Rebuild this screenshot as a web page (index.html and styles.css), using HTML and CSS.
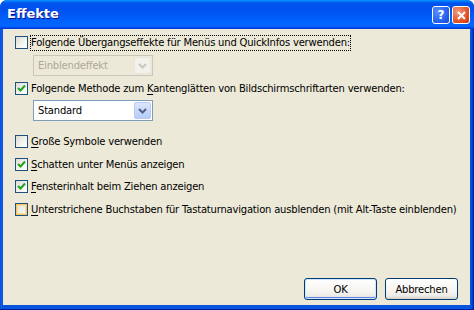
FILE: index.html
```html
<!DOCTYPE html>
<html>
<head>
    <meta charset="UTF-8">
    <title>Effekte</title>
    <link rel="stylesheet" href="styles.css">
</head>
<body>
    <div class="window">
        <div class="titlebar">
            <span class="title">Effekte</span>
            <div class="title-buttons">
                <div class="tb-btn help">?</div>
                <div class="tb-btn close">
                    <svg width="9" height="9" viewBox="0 0 9 9"><path d="M1 1 L8 8 M8 1 L1 8" stroke="#fff" stroke-width="2" fill="none"/></svg>
                </div>
            </div>
        </div>

        <div class="content">
            <div class="check-row first">
                <span class="box"></span>
                <span class="label focus">Folgende Übergangseffekte für Menüs und QuickInfos verwenden:</span>
            </div>
            <div class="combo disabled">
                <span class="combo-text">Einblendeffekt</span>
                <span class="combo-arrow">
                    <svg width="9" height="6" viewBox="0 0 9 6"><path d="M1 1 L4.5 4.5 L8 1" stroke="#C9C7BA" stroke-width="2" fill="none"/></svg>
                </span>
            </div>

            <div class="check-row row-method">
                <span class="box checked"><svg width="9" height="9" viewBox="0 0 9 9"><path d="M1 4 L3.5 6.5 L8 1.5" stroke="#21A121" stroke-width="2" fill="none"/></svg></span>
                <span class="label">Folgende Methode zum <u>K</u>antenglätten von Bildschirmschriftarten verwenden:</span>
            </div>
            <div class="combo combo-method">
                <span class="combo-text">Standard</span>
                <span class="combo-arrow">
                    <svg width="9" height="6" viewBox="0 0 9 6"><path d="M1 1 L4.5 4.5 L8 1" stroke="#4D6185" stroke-width="2" fill="none"/></svg>
                </span>
            </div>

            <div class="check-row row-large">
                <span class="box"></span>
                <span class="label"><u>G</u>roße Symbole verwenden</span>
            </div>
            <div class="check-row row-shadow">
                <span class="box checked"><svg width="9" height="9" viewBox="0 0 9 9"><path d="M1 4 L3.5 6.5 L8 1.5" stroke="#21A121" stroke-width="2" fill="none"/></svg></span>
                <span class="label"><u>S</u>chatten unter Menüs anzeigen</span>
            </div>
            <div class="check-row row-drag">
                <span class="box checked"><svg width="9" height="9" viewBox="0 0 9 9"><path d="M1 4 L3.5 6.5 L8 1.5" stroke="#21A121" stroke-width="2" fill="none"/></svg></span>
                <span class="label"><u>F</u>ensterinhalt beim Ziehen anzeigen</span>
            </div>
            <div class="check-row row-shadow">
                <span class="box hover"></span>
                <span class="label"><u>U</u>nterstrichene Buchstaben für Tastaturnavigation ausblenden (mit Alt-Taste einblenden)</span>
            </div>

            <div class="buttons">
                <button class="btn default">OK</button>
                <button class="btn">Abbrechen</button>
            </div>
        </div>
    </div>
</body>
</html>
```

FILE: styles.css
```css
* {
    margin: 0;
    padding: 0;
    box-sizing: border-box;
}

body {
    width: 474px;
    height: 310px;
    overflow: hidden;
    background: #fff;
    font-family: "DejaVu Sans", Verdana, sans-serif;
    font-size: 10px;
    letter-spacing: -0.2px;
    color: #000;
}

.window {
    width: 474px;
    height: 310px;
    display: flex;
    flex-direction: column;
    border-radius: 7px 7px 0 0;
    background: linear-gradient(to right, #0831D9 0, #166AEE 1px, #0855DD 2px, #0855DD 471px, #0843D0 472px, #001EA0 474px);
    padding: 0 4px 4px 3px;
    border-bottom: 1px solid #001EA0;
}

.titlebar {
    height: 29px;
    margin: 0 -4px 0 -3px;
    border-radius: 7px 7px 0 0;
    background: linear-gradient(#0997FF 0, #0053EE 3px, #0050EE 9px, #0066FF 24px, #0066FF 26px, #005BFF 27px, #003DD7 28px, #003DD7 29px);
    display: flex;
    align-items: center;
    justify-content: space-between;
    padding: 0 4px 2px 7px;
}

.title {
    color: #fff;
    font-weight: bold;
    font-size: 13px;
    letter-spacing: 0;
    text-shadow: 1px 1px #0F1089;
}

.title-buttons {
    display: flex;
    gap: 2px;
    margin-top: 3px;
}

.tb-btn {
    width: 18px;
    height: 18px;
    border: 1px solid #fff;
    border-radius: 3px;
    display: flex;
    align-items: center;
    justify-content: center;
    color: #fff;
    font-weight: bold;
    font-size: 12px;
    letter-spacing: 0;
}

.help {
    background: radial-gradient(circle at 30% 30%, #5A8EFF, #1F5DEA 70%, #1545C8);
}

.close {
    background: radial-gradient(circle at 30% 30%, #F29A7B, #E04A1F 70%, #C43A10);
}

.content {
    flex: 1;
    background: #ECE9D8;
    padding: 5px 12px 0 12px;
    display: flex;
    flex-direction: column;
}

.check-row {
    display: flex;
    align-items: center;
    height: 17px;
}

.row-method {
    margin-top: 4px;
}

.row-large {
    margin-top: 12px;
}

.row-shadow {
    margin-top: 6px;
}

.row-drag {
    margin-top: 5px;
}

.box {
    width: 13px;
    height: 13px;
    flex: none;
    border: 1px solid #1C5180;
    background: linear-gradient(135deg, #DCDCD7 0%, #F4F4F0 60%, #fff 100%);
    display: flex;
    align-items: center;
    justify-content: center;
}

.box.hover {
    background: linear-gradient(135deg, #DCDCD7, #fff);
    box-shadow: inset 0 0 0 1px #FCC35A, inset 0 0 0 2px #FDE0A1;
}

.label {
    margin-left: 2px;
    padding: 1px 1px 2px 1px;
    white-space: nowrap;
    line-height: 13px;
}

.label u {
    text-underline-offset: 2px;
}

.focus {
    outline: 1px dotted #000;
    outline-offset: -1px;
}

.combo {
    margin: 4px 0 0 18px;
    width: 120px;
    height: 21px;
    border: 1px solid #7F9DB9;
    background: #fff;
    display: flex;
    align-items: center;
    justify-content: space-between;
    padding: 1px;
}

.combo-method {
    margin-top: 3px;
}

.combo-text {
    padding-left: 3px;
}

.combo-arrow {
    width: 17px;
    height: 17px;
    border: 1px solid #B9CBF3;
    border-radius: 2px;
    background: linear-gradient(#DCE6FD, #B6CBF7);
    display: flex;
    align-items: center;
    justify-content: center;
}

.combo.disabled {
    border-color: #C9C7BA;
    background: #ECE9D8;
    color: #ACA899;
}

.combo.disabled .combo-arrow {
    border-color: #E8E6DA;
    background: #F2F1EB;
}

.buttons {
    margin-top: auto;
    margin-bottom: 5px;
    display: flex;
    justify-content: flex-end;
    gap: 8px;
}

.btn {
    width: 73px;
    height: 22px;
    font-family: "DejaVu Sans", Verdana, sans-serif;
    font-size: 10px;
    letter-spacing: -0.2px;
    color: #000;
    border: 1px solid #003C74;
    border-radius: 3px;
    background: linear-gradient(#FFFFFF 0%, #F6F5F1 60%, #ECEBE6 85%, #D6D0C5 100%);
}

.btn.default {
    box-shadow: inset 0 0 0 1px #CEE7FF, inset 0 -1px 0 1px #6982EE;
}
```
